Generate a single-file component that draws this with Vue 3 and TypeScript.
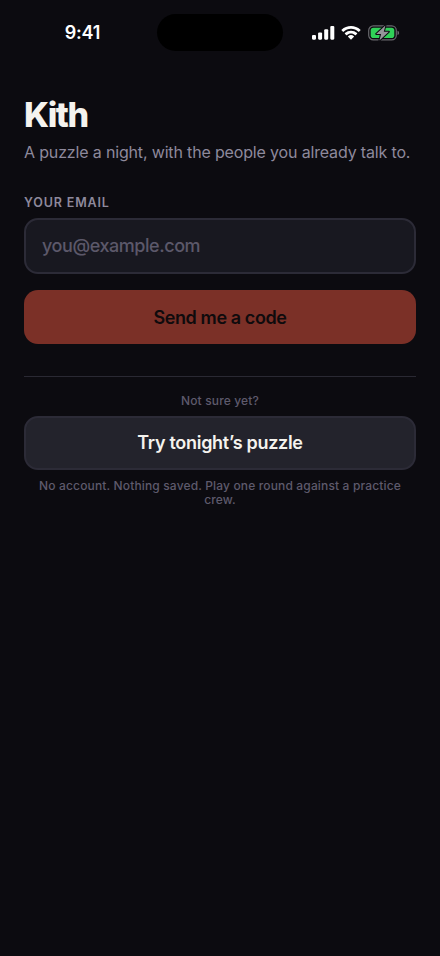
<script setup lang="ts">
import { ref } from 'vue'

const email = ref<string>('')
</script>

<template>
  <main class="screen">
    <header class="status">
      <div class="time">9:41</div>
      <div class="island"></div>
      <div class="indicators">
        <svg class="signal" width="23" height="14" viewBox="0 0 23 14" fill="#fff">
          <rect x="0" y="9" width="4" height="4.700" rx="1.1" />
          <rect x="6.1" y="6.4" width="4" height="7.300" rx="1.1" />
          <rect x="12.2" y="3.2" width="4" height="10.500" rx="1.1" />
          <rect x="18.3" y="0" width="4" height="13.700" rx="1.1" />
        </svg>
        <svg class="wifi" width="20" height="14" viewBox="0 0 17 12" fill="#fff">
          <path d="M8.5 2.4c2.4 0 4.7.9 6.400 2.600.13.12.33.12.46 0l1.240-1.270a.35.35 0 0 0 0-.5C12.100-1.060 4.900-1.060.4 3.230a.35.35 0 0 0 0 .5l1.240 1.270c.13.12.33.12.46 0C3.800 3.300 6.100 2.400 8.500 2.400z" />
          <path d="M8.500 6.500c1.300 0 2.600.5 3.500 1.350.14.13.35.13.48 0l1.240-1.280a.35.35 0 0 0 0-.5 7.600 7.600 0 0 0-10.440 0 .35.35 0 0 0 0 .5l1.240 1.280c.13.13.34.13.48 0 .9-.85 2.200-1.350 3.500-1.350z" />
          <path d="M10.990 9.300a.35.35 0 0 0-.02-.5 3.870 3.870 0 0 0-4.940 0 .35.35 0 0 0-.02.5l2.240 2.300c.14.140.36.140.5 0z" />
        </svg>
        <svg class="battery" width="32" height="16" viewBox="0 0 32 16">
          <rect x="0.700" y="0.900" width="27.600" height="13.900" rx="4.600" fill="none" stroke="#68686d" stroke-width="1.200" />
          <path d="M29.500 5.800c1 .3 1.600 1.100 1.600 2.100s-.6 1.800-1.600 2.100z" fill="#68686d" />
          <rect x="2.700" y="2.700" width="23.600" height="10.300" rx="2.800" fill="#30d158" />
          <path d="M17.400 .4L8.200 8.900h4.900l-1.700 6.600L20.800 6.800h-5z" fill="#96969a" stroke="#0c0b10" stroke-width="2" stroke-linejoin="round" paint-order="stroke" />
        </svg>
      </div>
    </header>

    <section class="content">
      <h1>Kith</h1>
      <p class="tagline">A puzzle a night, with the people you already talk to.</p>
      <form class="form" @submit.prevent>
        <label for="email">YOUR EMAIL</label>
        <input id="email" v-model="email" type="email" placeholder="you@example.com" />
        <button class="primary" type="submit">Send me a code</button>
      </form>
      <div class="trial">
        <p class="question">Not sure yet?</p>
        <button class="secondary" type="button">Try tonight’s puzzle</button>
        <p class="note">No account. Nothing saved. Play one round against a practice crew.</p>
      </div>
    </section>
  </main>
</template>

<style>
body {
  background: #0c0b10;
}
</style>

<style scoped>
.screen {
  box-sizing: border-box;
  height: 956px;
  overflow: hidden;
  background: #0c0b10;
  font-family: Inter, sans-serif;
  color: #f5f3ee;
}
.status {
  display: grid;
  grid-template-columns: 157px 126px 157px;
  height: 65px;
  align-items: center;
}
.time {
  padding-left: 8px;
  text-align: center;
  color: #fff;
  font-size: 18px;
  font-weight: 600;
  line-height: 20px;
  letter-spacing: -0.2px;
}
.island {
  height: 37px;
  border-radius: 19px;
  background: #000;
}
.indicators {
  display: flex;
  align-items: center;
  padding-left: 29px;
}
.wifi {
  margin-left: 6px;
}
.battery {
  margin-left: 7px;
}
.content {
  padding: 29px 24px 0;
}
h1 {
  margin: 0;
  font-size: 34px;
  font-weight: 800;
  line-height: 41px;
  letter-spacing: -1.5px;
}
.tagline {
  margin: 7px 0 0;
  color: #8e899c;
  font-size: 16px;
  line-height: 20px;
  letter-spacing: -0.16px;
  white-space: nowrap;
}
.form {
  display: flex;
  flex-direction: column;
  margin-top: 33px;
}
label {
  color: #8e899c;
  font-size: 12.500px;
  font-weight: 600;
  line-height: 16px;
  letter-spacing: 0.85px;
}
input {
  box-sizing: border-box;
  height: 56px;
  margin: 7px 0 0;
  padding: 0 16px 1px;
  border: 2px solid #2c2b37;
  border-radius: 14px;
  outline: none;
  background: #181820;
  color: #f5f3ee;
  font: 500 18px/22px Inter, sans-serif;
  letter-spacing: -0.44px;
}
input::placeholder {
  color: #5c586a;
  opacity: 1;
}
button {
  box-sizing: border-box;
  width: 100%;
  height: 54px;
  padding: 0;
  border: 0;
  border-radius: 14px;
  font: 600 18px/22px Inter, sans-serif;
  letter-spacing: -0.4px;
}
.primary {
  margin-top: 16px;
  padding-top: 2px;
  background: #7b3027;
  color: #0f0b0d;
}
.trial {
  margin-top: 32px;
  border-top: 1px solid #2a2933;
  text-align: center;
  color: #5e5a6c;
  font-size: 12px;
  font-weight: 500;
  line-height: 14px;
  letter-spacing: 0.15px;
}
.question {
  margin: 17px 0 8px;
}
.secondary {
  border: 2px solid #2c2b37;
  background: #23232c;
  color: #f5f3ee;
  letter-spacing: -0.3px;
}
.note {
  margin: 9px 0 0;
}
</style>
